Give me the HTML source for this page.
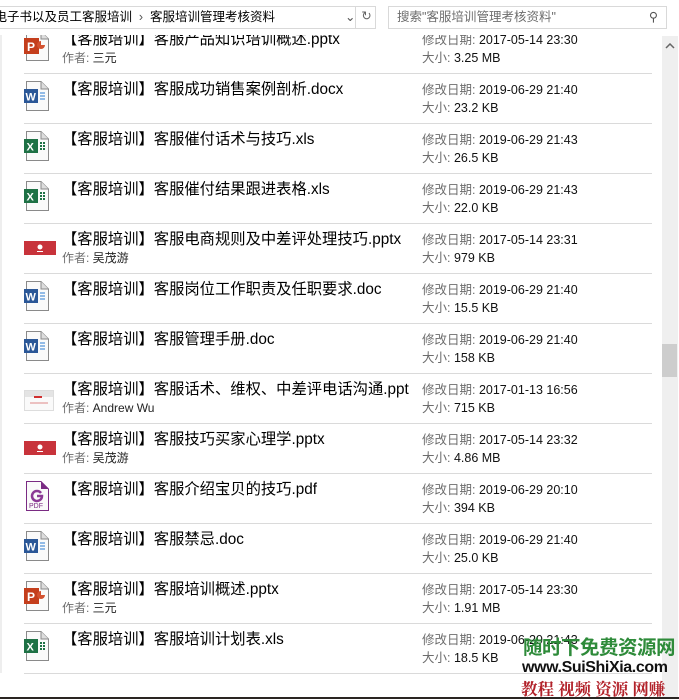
<!DOCTYPE html>
<html><head><meta charset="utf-8"><style>
*{margin:0;padding:0;box-sizing:border-box}
body{width:679px;height:699px;overflow:hidden;background:#fff;font-family:"Liberation Sans","Noto Sans CJK SC",sans-serif;position:relative}
.hdr{position:absolute;left:0;top:0;width:679px;height:35px;background:#fff}
.addr{position:absolute;left:-10px;top:6px;width:386px;height:23px;border:1px solid #d9d9d9;font-size:12.5px;color:#000;line-height:21px;white-space:nowrap}
.search{position:absolute;left:388px;top:6px;width:279px;height:23px;border:1px solid #d9d9d9;font-size:12.5px;color:#6d6d6d;line-height:21px;padding-left:8px}
.list{position:absolute;left:0;top:35px;width:679px;height:662px;overflow:hidden;background:#fff}
.lb{position:absolute;left:0;top:0;width:2px;height:638px;background:#eee}
.row{position:absolute;left:0;width:660px;height:50px}
.sep{position:absolute;left:24px;width:628px;height:1px;background:#dadada}
.t{position:absolute;left:62px;font-size:15.3px;color:#000;white-space:nowrap;line-height:18px}
.a{position:absolute;left:62px;font-size:12px;color:#222;white-space:nowrap;line-height:15px}
.m{position:absolute;left:422px;font-size:12.5px;color:#111;white-space:nowrap;line-height:15px}
.g{color:#6d6d6d}
.ic{position:absolute;left:24px}
.sb{position:absolute;left:662px;top:1px;width:16px;height:661px;background:#efefef}
.th{position:absolute;left:662px;top:309px;width:15px;height:33px;background:#cdcdcd}
.wm{position:absolute;font-weight:bold;white-space:nowrap}
</style></head><body>
<div class="hdr">
<div class="addr">&nbsp;电子书以及员工客服培训 &nbsp;<span style="color:#555">›</span>&nbsp; 客服培训管理考核资料<span style="position:absolute;left:354px;top:0;color:#555">⌄</span><span style="position:absolute;left:364px;top:-1px;width:22px;height:23px;border-left:1px solid #d9d9d9;color:#666;text-align:center">↻</span></div>
<div class="search">搜索"客服培训管理考核资料"<span style="position:absolute;right:8px;top:0;color:#555">⚲</span></div>
</div>
<div class="list" id="L">
<div class="lb"></div>
<div class="sb"></div><div class="th"></div>
<svg style="position:absolute;left:665px;top:8px" width="10" height="6"><path d="M1 5L5 1L9 5" stroke="#666" stroke-width="1.5" fill="none"/></svg>
</div>
<div style="position:absolute;left:0;top:697px;width:679px;height:2px;background:#2a2522"></div>
<div class="wm" style="left:523px;top:634px;font-size:19.5px;color:#2e8b3a;letter-spacing:-0.5px;font-family:'Noto Sans CJK SC',sans-serif;line-height:24px">随时下免费资源网</div>
<div class="wm" style="left:522px;top:659px;font-size:16px;color:#111;font-family:'Liberation Sans',sans-serif;letter-spacing:-0.4px;line-height:18px">www.SuiShiXia.com</div>
<div class="wm" style="left:521px;top:678px;font-size:16.5px;color:#b2222a;font-family:'Noto Serif CJK SC',serif;line-height:20px">教程 视频 资源 网赚</div>
<script>
var rows=[
["p","【客服培训】客服产品知识培训概述.pptx","三元","2017-05-14 23:30","3.25 MB"],
["w","【客服培训】客服成功销售案例剖析.docx","","2019-06-29 21:40","23.2 KB"],
["x","【客服培训】客服催付话术与技巧.xls","","2019-06-29 21:43","26.5 KB"],
["x","【客服培训】客服催付结果跟进表格.xls","","2019-06-29 21:43","22.0 KB"],
["r","【客服培训】客服电商规则及中差评处理技巧.pptx","吴茂游","2017-05-14 23:31","979 KB"],
["w","【客服培训】客服岗位工作职责及任职要求.doc","","2019-06-29 21:40","15.5 KB"],
["w","【客服培训】客服管理手册.doc","","2019-06-29 21:40","158 KB"],
["s","【客服培训】客服话术、维权、中差评电话沟通.ppt","Andrew Wu","2017-01-13 16:56","715 KB"],
["r","【客服培训】客服技巧买家心理学.pptx","吴茂游","2017-05-14 23:32","4.86 MB"],
["f","【客服培训】客服介绍宝贝的技巧.pdf","","2019-06-29 20:10","394 KB"],
["w","【客服培训】客服禁忌.doc","","2019-06-29 21:40","25.0 KB"],
["p","【客服培训】客服培训概述.pptx","三元","2017-05-14 23:30","1.91 MB"],
["x","【客服培训】客服培训计划表.xls","","2019-06-29 21:43","18.5 KB"]];
var page='<path d="M2.5 .5H17L24.5 8V29.5H2.5Z" fill="#fafafa" stroke="#8a8a8a"/><path d="M17 .5V8H24.5" fill="#ddd" stroke="#8a8a8a"/>';
var icons={
p:page+'<rect x="0" y="7" width="15" height="16" fill="#c43e1c"/><text x="3" y="20" font-size="12" font-weight="bold" fill="#fff" font-family="Liberation Sans">P</text><path d="M17 10a4 4 0 1 0 4 4h-4z" fill="#d35230"/>',
w:page+'<rect x="0" y="8" width="14" height="14" fill="#2b5797"/><text x="1.5" y="19.5" font-size="11" font-weight="bold" fill="#fff" font-family="Liberation Sans">W</text><path d="M16 12h5M16 15h5M16 18h5" stroke="#2b7cd3"/>',
x:page+'<rect x="0" y="8" width="14" height="14" fill="#1e7145"/><text x="2.5" y="19.5" font-size="11" font-weight="bold" fill="#fff" font-family="Liberation Sans">X</text><path d="M16 11h2v2h-2zM19 11h2v2h-2zM16 14h2v2h-2zM19 14h2v2h-2zM16 17h2v2h-2zM19 17h2v2h-2z" fill="#1e7145"/>',
r:'<rect x="0" y="10" width="32" height="14" fill="#c8333b"/><circle cx="16" cy="16" r="2.5" fill="#fff"/><rect x="13" y="20" width="6" height="1" fill="#fff"/>',
s:'<rect x=".5" y="9.5" width="29" height="20" fill="#fafafa" stroke="#ddd"/><rect x="1" y="10" width="28" height="6" fill="#e4e4e4"/><rect x="10" y="15" width="8" height="2" fill="#d03030"/><path d="M6 22h18" stroke="#d88"/>',
f:'<path d="M2.5 .5H17L24.5 8V29.5H2.5Z" fill="#fafafa" stroke="#7a2b83"/><path d="M17 .5V8H24.5Z" fill="#7a2b83"/><path d="M17 12a5 5 0 1 0 1 3h-5" stroke="#8b3a95" stroke-width="2.5" fill="none"/><text x="5" y="27" font-size="7" fill="#7a2b83" font-family="Liberation Sans">PDF</text>'
};
var h='';
rows.forEach(function(r,i){
 var top=50*i;
 h+='<div class="row" style="top:'+top+'px">';
 h+='<svg class="ic" style="top:-4px" width="34" height="31">'+icons[r[0]]+'</svg>';
 h+='<div class="t" style="top:-4px">'+r[1]+'</div>';
 if(r[2])h+='<div class="a" style="top:16px"><span class="g">作者: </span>'+r[2]+'</div>';
 h+='<div class="m" style="top:-2px"><span class="g">修改日期: </span>'+r[3]+'</div>';
 h+='<div class="m" style="top:16px"><span class="g">大小: </span>'+r[4]+'</div>';
 h+='<div class="sep" style="top:38px"></div></div>';
});
document.getElementById('L').insertAdjacentHTML('afterbegin',h);
</script>
</body></html>
